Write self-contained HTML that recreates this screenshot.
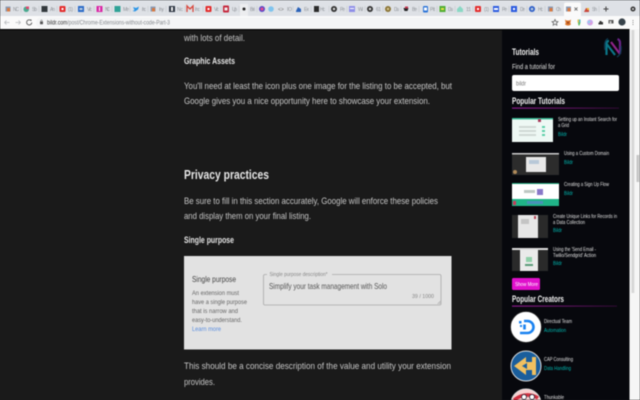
<!DOCTYPE html>
<html><head><meta charset="utf-8"><title>bildr</title>
<style>
html,body{margin:0;padding:0;background:#1a1a1a;width:640px;height:400px;overflow:hidden}
svg{display:block;position:absolute;left:0;top:0;filter:blur(.4px)}
text{font-family:"Liberation Sans",sans-serif}
.b{fill:#c6c6c6;font-size:9.2px}
.h{fill:#e6e6e6;font-size:8.8px;font-weight:bold}
.s{fill:#f4f4f4;font-size:8.8px;font-weight:bold}
.t{fill:#e0e0e0;font-size:5.400px}
.l{fill:#00b5ae;font-size:5.400px}
.g{fill:#666;font-size:6.6px}
</style></head><body>
<svg width="640" height="400" viewBox="0 0 640 400" xmlns="http://www.w3.org/2000/svg">
<!-- Chrome -->
<rect width="640" height="17" fill="#dee1e6"/>
<rect y="16" width="640" height="13" fill="#fafafa"/>
<rect x="36" y="17.500" width="522" height="10.500" rx="5" fill="#f4f5f6"/>
<path d="M564 16V4.500q0-2 2-2h13q2 0 2 2V16z" fill="#fafafa"/>
<!-- tab icons -->
<g>
<rect x="5.500" y="6.500" width="5" height="5" fill="#8a9bb5"/><rect x="7" y="8" width="3" height="3.500" fill="#d9793f"/>
<rect x="23.500" y="6.500" width="5.500" height="5.500" rx="2.700" fill="#4aa98f"/><rect x="26" y="6.500" width="3" height="2.500" fill="#e0476e"/>
<rect x="41.500" y="6" width="6" height="6" fill="#33393d"/>
<rect x="59.500" y="6" width="6" height="6" rx="1" fill="#e32c2c"/><rect x="61.500" y="8" width="2" height="2" fill="#fff"/>
<rect x="78" y="6" width="6" height="6" fill="#2b6bc8"/><rect x="79.500" y="8" width="3" height="2" fill="#bcd"/>
<rect x="96.500" y="6" width="6" height="6" fill="#d928a6"/><rect x="99" y="7" width="1" height="4" fill="#fff"/>
<rect x="114.500" y="6" width="6" height="6" fill="#2fa296"/>
<path d="M133 7l3 1 3-1.500-1 3-3 2-2.500-.5 2-1z" fill="#2b95e6"/>
<rect x="150.500" y="6.500" width="5" height="5" fill="#8a9bb5"/><rect x="152" y="8" width="3" height="3.500" fill="#d9793f"/>
<rect x="169" y="6" width="6" height="6" fill="#2b3340"/><rect x="171" y="7" width="2" height="4" fill="#eee"/>
<path d="M187 12V6l3 3 3-3v6" fill="none" stroke="#d8453a" stroke-width="1.300"/>
<rect x="205.500" y="6" width="6" height="6" rx="1" fill="#e32c2c"/><rect x="207.500" y="8" width="2" height="2" fill="#fff"/>
<rect x="223" y="5.500" width="6" height="7" rx="1" fill="#c5283d"/><rect x="224.500" y="7.500" width="3" height="3" fill="#eee"/>
<rect x="240" y="4" width="8" height="12" fill="#f2f2f2" opacity=".7"/><circle cx="244" cy="9" r="1.500" fill="#222"/>
<circle cx="262" cy="9" r="3" fill="#5a48c8"/><circle cx="262" cy="9" r="1.500" fill="#e64a8a"/>
<circle cx="271" cy="9" r="2.800" fill="#7fc4ee"/>
<text x="278" y="11" font-size="5" fill="#777">&lt;&gt;</text>
<path d="M296 11l2-4 3 2 0 3h-5z" fill="#2a62b8"/>
<rect x="314" y="6" width="5" height="6" fill="#2b2b2b"/>
<circle cx="334" cy="9" r="3" fill="#333"/><circle cx="334" cy="9" r="1.200" fill="#ddd"/>
<rect x="349" y="6" width="6" height="6" fill="#8f8fe8"/><rect x="350" y="8" width="4" height="1" fill="#fff"/>
<circle cx="370" cy="9" r="3" fill="#333"/><circle cx="370" cy="9" r="1.200" fill="#ddd"/>
<circle cx="388" cy="9" r="3" fill="#8a7436"/><circle cx="388" cy="9" r="1.200" fill="#d7c690"/>
<path d="M403.500 8h5l-1 3h-3z" fill="#222"/><rect x="405" y="6.500" width="3" height="2" fill="#c2334d"/>
<rect x="423" y="6" width="5" height="6.500" rx="1" fill="#2b74d8"/><rect x="424" y="7.500" width="3" height="3" fill="#fff"/>
<rect x="439.500" y="6" width="6" height="6" fill="#4fae33"/><rect x="441" y="8" width="3" height="2" fill="#e8e048"/>
<path d="M460 6l3 3v3h-6V9z" fill="#8ad8c4"/>
<rect x="475" y="6" width="6" height="6" rx="1" fill="#e32c2c"/><rect x="477" y="8" width="2" height="2" fill="#fff"/>
<rect x="493" y="6" width="6" height="6" fill="#2a5ae0"/><rect x="494" y="8" width="4" height="2" fill="#fff"/>
<rect x="511" y="6" width="6" height="6" fill="#2a5ae0"/><rect x="513" y="8" width="2" height="2" fill="#fff"/>
<circle cx="532" cy="9" r="3" fill="#2d5ec8"/><circle cx="532" cy="9" r="1.300" fill="#bcd"/>
<rect x="548" y="6.500" width="5" height="5" fill="#8a9bb5"/><rect x="549.500" y="8" width="3" height="3.500" fill="#d9793f"/>
<rect x="566" y="6.500" width="5" height="5" fill="#8a9bb5"/><rect x="567.500" y="8" width="3" height="3.500" fill="#d9793f"/>
<path d="M574.500 7.500l3 3m0-3l-3 3" stroke="#555" stroke-width=".8"/>
<path d="M584 12l2-4 3 1v3z" fill="#c8443a"/><rect x="587" y="8" width="2" height="2" fill="#f0b838"/>
</g>
<g font-size="5" fill="#92969b">
<text x="13" y="11" textLength="6">NC</text><text x="32" y="11" textLength="5">Slo</text><text x="50" y="11" textLength="5">An</text><text x="68" y="11" textLength="5">(1)</text><text x="87" y="11" textLength="5">Vic</text><text x="105" y="11" textLength="5">NC</text><text x="123" y="11" textLength="6">Me</text><text x="142" y="11" textLength="4">Inc</text><text x="159" y="11" textLength="5">Iny</text><text x="177" y="11" textLength="6">Nc</text><text x="195" y="11" textLength="5">Inc</text><text x="214" y="11" textLength="5">Vic</text><text x="232" y="11" textLength="5">Up</text><text x="250" y="11" textLength="5">Bri</text><text x="287" y="11" textLength="5">IO</text><text x="304" y="11" textLength="5">Ex</text><text x="320" y="11" textLength="5">Hc</text><text x="340" y="11" textLength="5">Pe</text><text x="358" y="11" textLength="5">Wi</text><text x="376" y="11" textLength="5">61</text><text x="394" y="11" textLength="5">Du</text><text x="412" y="11" textLength="5">Be</text><text x="430" y="11" textLength="5">Pit</text><text x="448" y="11" textLength="5">Du</text><text x="466" y="11" textLength="5">1:1</text><text x="484" y="11" textLength="5">(1)</text><text x="502" y="11" textLength="5">Pe</text><text x="520" y="11" textLength="5">De</text><text x="538" y="11" textLength="5">Hc</text><text x="556" y="11" textLength="5">Ch</text><text x="592" y="11" textLength="5">Sh</text>
</g>
<g stroke="#c0c3c7" stroke-width=".5">
<path d="M21 6v6M39 6v6M57 6v6M75 6v6M94 6v6M112 6v6M130 6v6M148 6v6M166 6v6M185 6v6M203 6v6M221 6v6M239 6v6M257 6v6M293 6v6M311 6v6M329 6v6M347 6v6M365 6v6M383 6v6M401 6v6M419 6v6M437 6v6M455 6v6M473 6v6M491 6v6M509 6v6M527 6v6M545 6v6M599 6v6"/>
</g>
<path d="M606 6.500v5M603.500 9h5" stroke="#444" stroke-width="1"/>
<circle cx="633" cy="9" r="2.500" fill="#333"/><circle cx="633" cy="9" r="1" fill="#ddd"/>
<!-- nav -->
<path d="M4.500 22.500h5M4.500 22.500l2-2M4.500 22.500l2 2" stroke="#b5b8bb" stroke-width=".8" fill="none"/>
<path d="M20.500 22.500h-5M20.500 22.500l-2-2M20.500 22.500l-2 2" stroke="#b5b8bb" stroke-width=".8" fill="none"/>
<path d="M31 20.500a2.600 2.600 0 1 0 .8 2" stroke="#555" stroke-width=".9" fill="none"/><path d="M29.800 19.500l1.700 0 0 1.700z" fill="#555"/>
<rect x="40" y="21.500" width="3" height="2.800" rx=".4" fill="#555"/><path d="M40.700 21.500v-.7a.8.8 0 0 1 1.600 0v.7" stroke="#555" stroke-width=".5" fill="none"/>
<text y="24.600" x="47" font-size="6.200" textLength="123" lengthAdjust="spacingAndGlyphs" fill="#85898d"><tspan fill="#333">bildr.com</tspan>/post/Chrome-Extensions-without-code-Part-3</text>
<path d="M555 19.500l.9 2 2.100.2-1.600 1.400.5 2.100-1.900-1.100-1.900 1.100.5-2.100-1.600-1.400 2.100-.2z" fill="none" stroke="#555" stroke-width=".7"/>
<path d="M565 19.500l1.500 1h3l1.500-1-.7 3.500.7 1.500-2 1h-2l-2-1 .7-1.500z" fill="#d9742a"/><circle cx="568" cy="22.700" r=".8" fill="#7a2a1a"/>
<rect x="577.500" y="19.500" width="1.500" height="3" fill="#e6c04a"/><rect x="579" y="19.500" width="1.500" height="3" fill="#4ab8c8"/><path d="M578 22.500h2.500l-1 3h-1z" fill="#58b858"/>
<circle cx="590" cy="22.500" r="3" fill="#c8a8ee"/><circle cx="589" cy="22" r="1.200" fill="#8ed8ee"/><circle cx="591" cy="23.500" r="1" fill="#ee9ad0"/>
<path d="M598.500 24.500v-2h1v-1.500h2V22h1.500v2.500z" fill="#333"/>
<rect x="608.500" y="20" width="5" height="3.500" fill="#555"/><rect x="609.500" y="21" width="2" height="3" fill="#ccc"/>
<circle cx="622" cy="22" r="3.600" fill="#37424a"/>
<circle cx="633" cy="20.500" r=".5" fill="#666"/><circle cx="633" cy="22.500" r=".5" fill="#666"/><circle cx="633" cy="24.500" r=".5" fill="#666"/>
<!-- Main -->
<rect y="29" width="640" height="371" fill="#1a1a1a"/>
<rect y="29" width="640" height="1.300" fill="#050505"/>
<text class="b" x="184" y="41" textLength="61" lengthAdjust="spacingAndGlyphs">with lots of detail.</text>
<text class="h" x="184" y="64" textLength="51" lengthAdjust="spacingAndGlyphs">Graphic Assets</text>
<text class="b" x="184" y="89" textLength="268" lengthAdjust="spacingAndGlyphs">You'll need at least the icon plus one image for the listing to be accepted, but</text>
<text class="b" x="184" y="104" textLength="246" lengthAdjust="spacingAndGlyphs">Google gives you a nice opportunity here to showcase your extension.</text>
<text x="184" y="179" font-size="13px" font-weight="bold" fill="#e6e6e6" textLength="85" lengthAdjust="spacingAndGlyphs">Privacy practices</text>
<text class="b" x="184" y="204" textLength="254" lengthAdjust="spacingAndGlyphs">Be sure to fill in this section accurately, Google will enforce these policies</text>
<text class="b" x="184" y="219" textLength="127" lengthAdjust="spacingAndGlyphs">and display them on your final listing.</text>
<text class="h" x="184" y="243" textLength="50" lengthAdjust="spacingAndGlyphs">Single purpose</text>
<rect x="184" y="256" width="267.500" height="93.500" fill="#e2e2e2"/>
<text x="192" y="282" font-size="7.800" fill="#444" textLength="44" lengthAdjust="spacingAndGlyphs">Single purpose</text>
<text class="g" x="192" y="295" textLength="47" lengthAdjust="spacingAndGlyphs">An extension must</text>
<text class="g" x="192" y="304" textLength="55" lengthAdjust="spacingAndGlyphs">have a single purpose</text>
<text class="g" x="192" y="313" textLength="46" lengthAdjust="spacingAndGlyphs">that is narrow and</text>
<text class="g" x="192" y="322" textLength="50" lengthAdjust="spacingAndGlyphs">easy-to-understand.</text>
<text x="192" y="331" font-size="6.600" fill="#5a8ee0" textLength="29" lengthAdjust="spacingAndGlyphs">Learn more</text>
<rect x="263.500" y="274.500" width="177.500" height="30.500" rx="1.500" fill="none" stroke="#a9a9a9" stroke-width=".8"/>
<rect x="267" y="272" width="65" height="5" fill="#e2e2e2"/>
<text x="269.500" y="276" font-size="5.200" fill="#888" textLength="58" lengthAdjust="spacingAndGlyphs">Single purpose description*</text>
<text x="269" y="289" font-size="8.200" fill="#555" textLength="118" lengthAdjust="spacingAndGlyphs">Simplify your task management with Solo</text>
<text x="412" y="298" font-size="5.200" fill="#888" textLength="22" lengthAdjust="spacingAndGlyphs">39 / 1000</text>
<path d="M437.500 304l3-3M439 304l1.500-1.500" stroke="#888" stroke-width=".5"/>
<text class="b" x="184" y="369" textLength="267" lengthAdjust="spacingAndGlyphs">This should be a concise description of the value and utility your extension</text>
<text class="b" x="184" y="385" textLength="31" lengthAdjust="spacingAndGlyphs">provides.</text>
<!-- Sidebar -->
<rect x="502" y="30" width="127.500" height="370" fill="#07080d"/>
<rect x="629.500" y="29" width="10.500" height="371" fill="#f6f6f6"/>
<rect x="631.500" y="30" width="2.800" height="263" fill="#d6d6d6"/>
<rect x="636.500" y="155" width="2.800" height="27" fill="#c6c6c6"/>
<!-- logo -->
<g fill="none" stroke-width="2.200">
<path d="M606.500 55V44q0-3 2.500-3" stroke="#0b7688"/><path d="M606 43l9 12" stroke="#0b7688"/>
<path d="M611 42l9 12" stroke="#90248a"/><path d="M620 54V43q0-3-2.500-4" stroke="#6a2488"/>
<path d="M605 50q-1.500-9 3-11.500M621 46q1 8-4 11" stroke="#103e56" stroke-width="1.200"/>
</g>
<text class="s" x="512" y="55" textLength="27" lengthAdjust="spacingAndGlyphs">Tutorials</text>
<text x="512" y="69" font-size="7px" fill="#e0e0e0" textLength="43" lengthAdjust="spacingAndGlyphs">Find a tutorial for</text>
<rect x="512" y="75" width="107" height="16" rx="2" fill="#fff"/>
<text x="516" y="85.500" font-size="6.400" fill="#777" textLength="10" lengthAdjust="spacingAndGlyphs">bildr</text>
<text class="s" x="512" y="104" textLength="53" lengthAdjust="spacingAndGlyphs">Popular Tutorials</text>
<defs><linearGradient id="pl" x1="0" x2="1"><stop offset="0" stop-color="#8a1a8a"/><stop offset="1" stop-color="#2a0a2e"/></linearGradient></defs>
<rect x="512" y="107.500" width="107" height="1.200" fill="url(#pl)"/>
<!-- thumb 1 -->
<rect x="512" y="118" width="41" height="24" fill="#eef8f4"/><rect x="512" y="118" width="41" height="1.500" fill="#3fbf9a"/><rect x="519" y="126" width="17" height="2" fill="#cfd8d4"/><rect x="519" y="130" width="17" height="2" fill="#cfd8d4"/><rect x="519" y="134" width="17" height="2" fill="#cfd8d4"/><rect x="542" y="126" width="3" height="2" fill="#5cd0a8"/><rect x="542" y="130" width="3" height="2" fill="#5cd0a8"/><rect x="542" y="134" width="3" height="2" fill="#5cd0a8"/><rect x="538" y="119" width="3" height="3" fill="#a83a5a"/>
<text class="t" x="558" y="121" textLength="59" lengthAdjust="spacingAndGlyphs">Setting up an Instant Search for</text>
<text class="t" x="558" y="127" textLength="11" lengthAdjust="spacingAndGlyphs">a Grid</text>
<text class="l" x="558" y="136" textLength="9" lengthAdjust="spacingAndGlyphs">Bildr</text>
<!-- thumb 2 -->
<rect x="512" y="153" width="47" height="22" fill="#2c2c2c"/><rect x="512" y="153" width="47" height="1.500" fill="#ccc"/><rect x="526" y="157" width="20" height="15" fill="#e8e8e8"/><rect x="529" y="160" width="10" height="4" fill="#b8c8d8"/><circle cx="515" cy="172" r="2" fill="#b08a5a"/>
<text class="t" x="564" y="155" textLength="45" lengthAdjust="spacingAndGlyphs">Using a Custom Domain</text>
<text class="l" x="564" y="164" textLength="9" lengthAdjust="spacingAndGlyphs">Bildr</text>
<!-- thumb 3 -->
<rect x="512" y="183" width="47" height="16" fill="#fff"/><rect x="512" y="199" width="47" height="7" fill="#20b488"/><rect x="512" y="183" width="47" height="1" fill="#1aa578"/><rect x="524" y="190" width="11" height="3" fill="#bfc8c4"/><rect x="537" y="189" width="6" height="6" fill="#8878c8"/><rect x="527" y="201" width="16" height="3" fill="#4a90b8"/><rect x="513" y="201" width="3" height="4" fill="#c83a5a"/>
<text class="t" x="564" y="186" textLength="45" lengthAdjust="spacingAndGlyphs">Creating a Sign Up Flow</text>
<text class="l" x="564" y="195" textLength="9" lengthAdjust="spacingAndGlyphs">Bildr</text>
<!-- thumb 4 -->
<rect x="512" y="215" width="36" height="23" fill="#2a2a2a"/><rect x="518" y="215" width="20" height="23" fill="#e6e6e6"/><rect x="521" y="219" width="8" height="5" fill="#c4c4c4"/><rect x="534" y="216" width="2" height="3" fill="#b84a5a"/>
<text class="t" x="553" y="218" textLength="64" lengthAdjust="spacingAndGlyphs">Create Unique Links for Records in</text>
<text class="t" x="553" y="224" textLength="32" lengthAdjust="spacingAndGlyphs">a Data Collection</text>
<text class="l" x="553" y="232" textLength="9" lengthAdjust="spacingAndGlyphs">Bildr</text>
<!-- thumb 5 -->
<rect x="512" y="248" width="36" height="23" fill="#2a2a2a"/><rect x="512" y="248" width="36" height="2" fill="#ddd"/><rect x="520" y="250" width="18" height="21" fill="#eaeaea"/><rect x="526" y="257" width="6" height="5" fill="#8fcfa8"/><rect x="525" y="264" width="8" height="2" fill="#5a9a78"/>
<text class="t" x="553" y="251" textLength="43" lengthAdjust="spacingAndGlyphs">Using the 'Send Email -</text>
<text class="t" x="553" y="257" textLength="43" lengthAdjust="spacingAndGlyphs">Twilio/Sendgrid' Action</text>
<text class="l" x="553" y="265" textLength="9" lengthAdjust="spacingAndGlyphs">Bildr</text>
<!-- button -->
<rect x="512" y="278" width="28" height="12" rx="1.500" fill="#e010cc"/>
<text x="515" y="286" font-size="5.600" fill="#fff" textLength="23" lengthAdjust="spacingAndGlyphs">Show More</text>
<text class="s" x="512" y="302" textLength="52" lengthAdjust="spacingAndGlyphs">Popular Creators</text>
<rect x="512" y="305.500" width="105" height="1.200" fill="url(#pl)"/>
<!-- creators -->
<circle cx="526" cy="327" r="15.500" fill="#fff" stroke="#222" stroke-width=".8"/>
<path d="M524 321h3.500a6 6 0 0 1 0 12H520" fill="none" stroke="#1a82f0" stroke-width="2.600"/><path d="M524.500 324.500v5" stroke="#1a82f0" stroke-width="2.600"/><rect x="519" y="321" width="2.500" height="2.500" fill="#1a82f0"/><rect x="520" y="325" width="2" height="2" fill="#1a82f0"/>
<text class="t" x="544" y="323" textLength="28" lengthAdjust="spacingAndGlyphs">Directual Team</text>
<text class="l" x="544" y="332" textLength="22" lengthAdjust="spacingAndGlyphs">Automation</text>
<circle cx="526" cy="366" r="15" fill="#1a5e9c" stroke="#ddd" stroke-width="1"/>
<path d="M514 366l12-9v5h6v-5h4v18h-4v-5h-6v5z" fill="#f0c060"/><path d="M522 366l5-3v6z" fill="#1a5e9c"/>
<text class="t" x="544" y="361" textLength="29" lengthAdjust="spacingAndGlyphs">CAP Consulting</text>
<text class="l" x="544" y="370" textLength="27" lengthAdjust="spacingAndGlyphs">Data Handling</text>
<circle cx="526" cy="404" r="15" fill="#f8d0d0" stroke="#ddd" stroke-width="1"/>
<path d="M514 400q12-9 24-2" stroke="#d03040" stroke-width="3.500" fill="none"/>
<circle cx="524" cy="397" r="2.500" fill="#fff" stroke="#223" stroke-width=".8"/><circle cx="532" cy="397" r="2.500" fill="#fff" stroke="#223" stroke-width=".8"/>
<text class="t" x="544" y="399" textLength="20" lengthAdjust="spacingAndGlyphs">Thunkable</text>
</svg>
</body></html>
